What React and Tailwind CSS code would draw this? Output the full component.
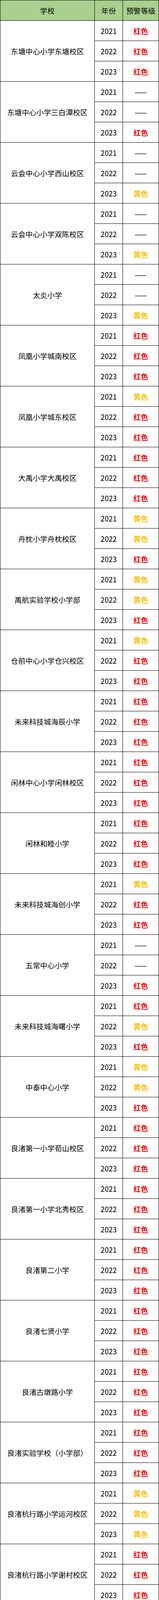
import React from "react";

const R = "红色";
const Y = "黄色";
const D = "——";

const data = [
  ["东塘中心小学东塘校区", [R, R, R]],
  ["东塘中心小学三白潭校区", [D, D, R]],
  ["云会中心小学西山校区", [D, D, Y]],
  ["云会中心小学双陈校区", [D, D, Y]],
  ["太炎小学", [D, D, Y]],
  ["凤凰小学城南校区", [R, R, R]],
  ["凤凰小学城东校区", [Y, R, R]],
  ["大禹小学大禹校区", [R, R, R]],
  ["舟枕小学舟枕校区", [Y, Y, R]],
  ["禹航实验学校小学部", [Y, Y, R]],
  ["仓前中心小学仓兴校区", [Y, R, R]],
  ["未来科技城海辰小学", [R, R, R]],
  ["闲林中心小学闲林校区", [R, R, R]],
  ["闲林和睦小学", [R, R, R]],
  ["未来科技城海创小学", [Y, R, R]],
  ["五常中心小学", [D, D, R]],
  ["未来科技城海曙小学", [R, Y, R]],
  ["中泰中心小学", [Y, Y, R]],
  ["良渚第一小学荀山校区", [R, R, R]],
  ["良渚第一小学北秀校区", [R, R, R]],
  ["良渚第二小学", [R, R, R]],
  ["良渚七贤小学", [R, R, R]],
  ["良渚古墩路小学", [R, R, R]],
  ["良渚实验学校（小学部）", [R, R, R]],
  ["良渚杭行路小学运河校区", [Y, Y, Y]],
  ["良渚杭行路小学谢村校区", [R, R, R]],
  ["瓶窑镇第一小学", [D, D, R]],
  ["瓶窑镇第二小学", [D, D, Y]],
  ["瓶窑镇彭公中心小学", [D, D, Y]],
];

const years = ["2021", "2022", "2023"];

function Level({ v }) {
  if (v === R) return <span className="font-bold text-[#ff0000]">红色</span>;
  if (v === Y) return <span className="font-bold text-[#ffc000]">黄色</span>;
  return <span className="text-black tracking-[2px] pl-[2px]">——</span>;
}

function Row({ year, level }) {
  return (
    <div className="grid grid-cols-[72px_92px] h-[52px]">
      <div className="h-[52px] flex items-center justify-center border-r border-b border-black">
        {year}
      </div>
      <div className="h-[52px] flex items-center justify-center border-r border-b border-black">
        <Level v={level} />
      </div>
    </div>
  );
}

export default function App() {
  return (
    <div
      className="w-[406px] bg-white border-l border-t border-black text-black text-[18.67px] leading-[20px]"
      style={{ fontFamily: '"Noto Sans CJK SC", "Noto Sans", sans-serif' }}
    >
      <div className="grid grid-cols-[241px_72px_92px] h-[52px] bg-[#a9d08e]">
        <div className="h-[52px] flex items-center justify-center border-r border-b border-black">学校</div>
        <div className="h-[52px] flex items-center justify-center border-r border-b border-black">年份</div>
        <div className="h-[52px] flex items-center justify-center border-r border-b border-black">预警等级</div>
      </div>
      {data.map(([name, levels], i) => (
        <div key={i} className="grid grid-cols-[241px_164px] h-[156px]">
          <div className="h-[156px] flex items-center justify-center border-r border-b border-black whitespace-nowrap">
            {name}
          </div>
          <div className="grid grid-rows-3 h-[156px]">
            {years.map((y, j) => (
              <Row key={j} year={y} level={levels[j]} />
            ))}
          </div>
        </div>
      ))}
    </div>
  );
}
